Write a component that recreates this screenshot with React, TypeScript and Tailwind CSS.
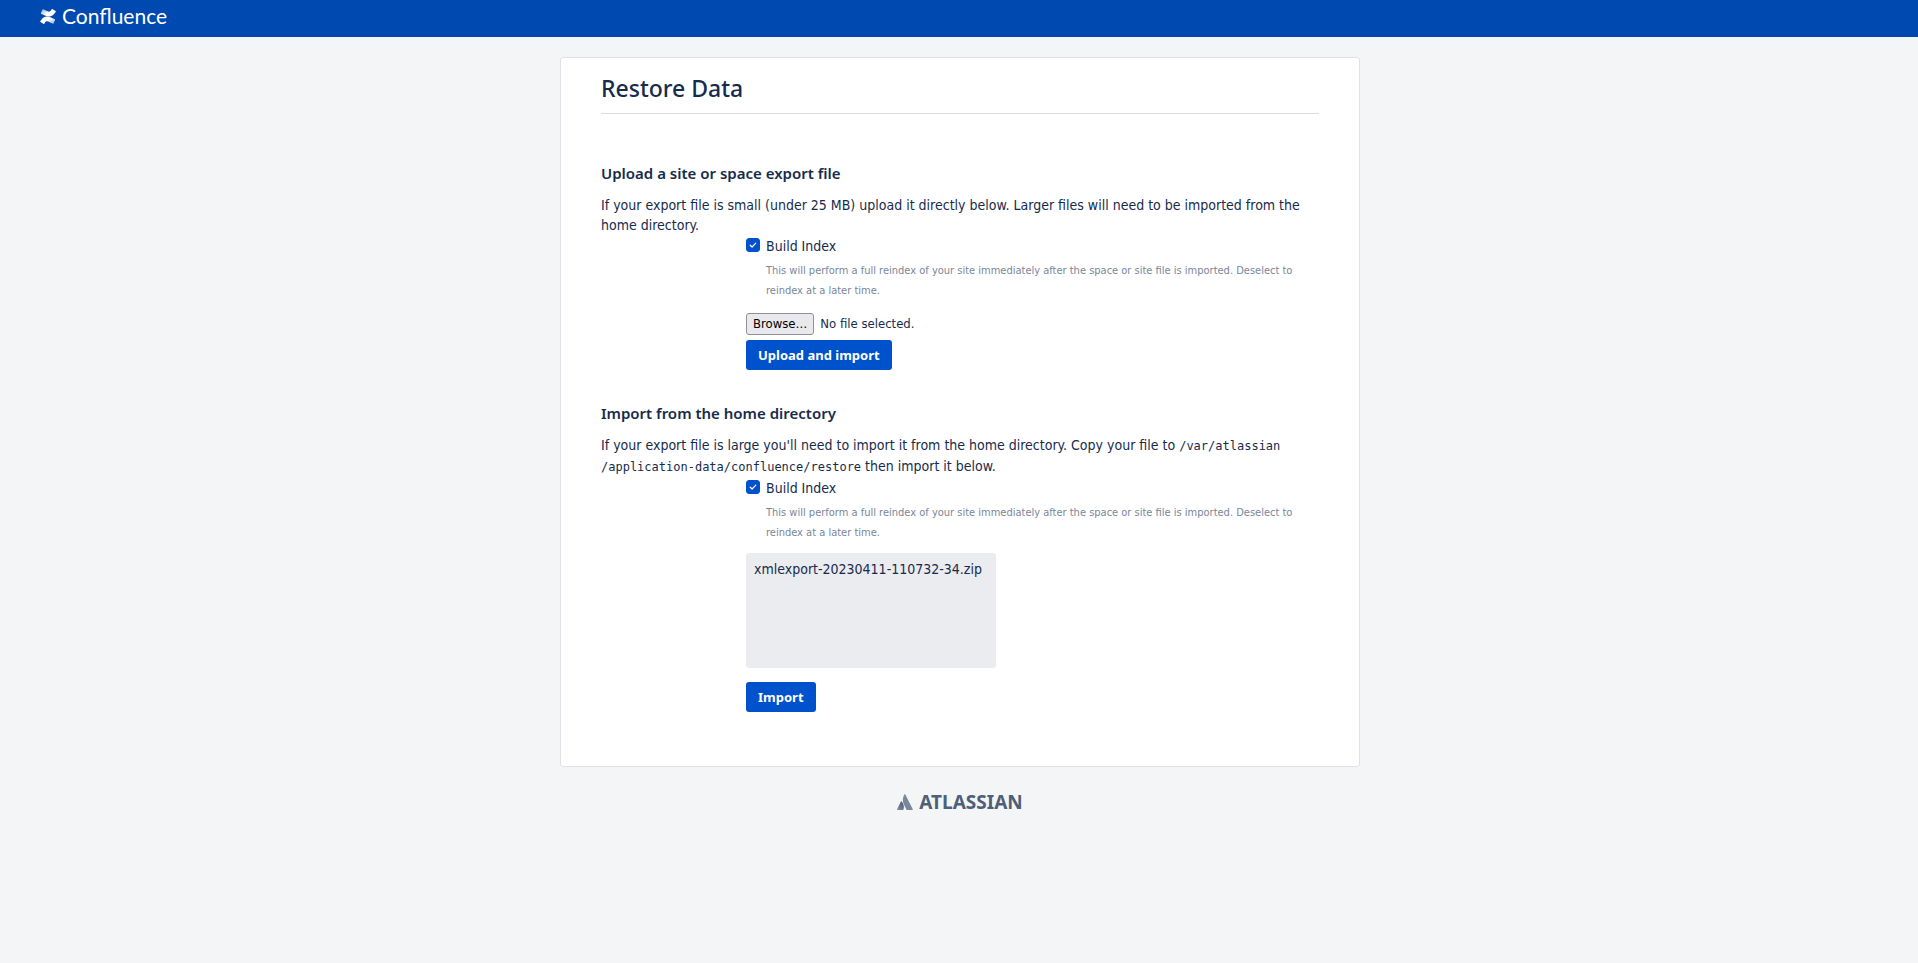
import type { ReactNode } from 'react';

const SWOOSH =
  'M9.26 187.33c-2.64 4.307-5.607 9.305-8.126 13.287a8.127 8.127 0 0 0 2.722 11.052l52.823 32.507a8.127 8.127 0 0 0 11.256-2.763c2.113-3.536 4.835-8.127 7.801-13.044 20.926-34.538 41.974-30.312 79.925-12.19l52.376 24.908a8.127 8.127 0 0 0 10.93-4.063l25.152-56.886a8.127 8.127 0 0 0-4.063-10.646c-11.052-5.201-33.034-15.562-52.823-25.111-71.189-34.579-131.691-32.344-177.973 42.949z';

function ConfluenceLogo() {
  return (
    <a href="#home" className="flex items-center gap-1.5 text-white">
      <svg viewBox="0 0 256 246" className="h-[15px] w-4" aria-hidden="true">
        <defs>
          <linearGradient id="swoosh" x1="1" y1="1" x2="0.2" y2="0.4">
            <stop offset="0" stopColor="#fff" stopOpacity="0.5" />
            <stop offset="0.7" stopColor="#fff" />
          </linearGradient>
        </defs>
        <path d={SWOOSH} fill="url(#swoosh)" />
        <path d={SWOOSH} fill="url(#swoosh)" transform="rotate(180 128 123)" />
      </svg>
      <span className="font-['Lato',sans-serif] text-[21px] leading-6">Confluence</span>
    </a>
  );
}

function AtlassianLogo() {
  return (
    <a href="#atlassian" className="flex items-center gap-1.5 text-[#505f79]">
      <svg viewBox="0 0 16 16" className="h-4 w-4" aria-hidden="true">
        <defs>
          <linearGradient id="atlassian-left" x1="0.9" y1="0.2" x2="0.3" y2="1">
            <stop offset="0" stopColor="#505f79" />
            <stop offset="1" stopColor="#7a869a" />
          </linearGradient>
        </defs>
        <path
          d="M4.700 7.400c-.2-.3-.6-.3-.8.1L.1 15.300c-.1.3.1.700.5.700h5.300c.2 0 .4-.1.500-.3 1.100-2.400.4-6-1.700-8.300z"
          fill="url(#atlassian-left)"
        />
        <path
          d="M7.500.4C5.300 3.800 5.500 7.600 6.900 10.400l2.600 5.300c.1.200.3.3.5.3h5.300c.4 0 .6-.4.5-.7L8.300.4c-.2-.4-.6-.4-.8 0z"
          fill="#7a869a"
        />
      </svg>
      <span className="text-[19px] leading-6 font-bold">ATLASSIAN</span>
    </a>
  );
}

function BuildIndex({ id }: { id: string }) {
  return (
    <div className="mt-px flex gap-1.5">
      <span className="grid h-4 w-3.5 shrink-0 items-end">
        <input
          id={id}
          type="checkbox"
          defaultChecked
          aria-describedby={`${id}-hint`}
          className="peer col-start-1 row-start-1 size-3.5 appearance-none rounded-[3px] border border-[#8f8f9d] bg-white checked:border-[#0052cc] checked:bg-[#0052cc]"
        />
        <svg
          viewBox="0 0 14 14"
          className="pointer-events-none col-start-1 row-start-1 hidden size-3.5 peer-checked:block"
          aria-hidden="true"
        >
          <path
            d="M4.200 7.200l1.900 1.800 3.700-3.800"
            fill="none"
            stroke="#fff"
            strokeWidth="1.200"
            strokeLinecap="round"
            strokeLinejoin="round"
          />
        </svg>
      </span>
      <div>
        <label htmlFor={id} className="block">
          Build Index
        </label>
        <p id={`${id}-hint`} className="mt-[5px] text-[11px] leading-5 text-[#7a869a]">
          This will perform a full reindex of your site immediately after the space or site file is imported. Deselect
          to reindex at a later time.
        </p>
      </div>
    </div>
  );
}

function PrimaryButton({ children }: { children: ReactNode }) {
  return (
    <button
      type="submit"
      className="block h-[30px] rounded-[3px] bg-[#0052cc] px-3 font-['Noto_Sans',sans-serif] text-[13px] leading-5 font-bold text-white hover:bg-[#0065ff]"
    >
      {children}
    </button>
  );
}

function SectionHeading({ children }: { children: ReactNode }) {
  return <h2 className="font-['Noto_Sans',sans-serif] text-[15px] leading-5 font-semibold">{children}</h2>;
}

export default function App() {
  return (
    <div className="flex min-h-screen flex-col bg-[#f4f5f7] font-['Noto_Sans',sans-serif] text-[#172b4d]">
      <header className="h-[37px] bg-[#0049b0] pt-1 pl-10">
        <div className="flex">
          <ConfluenceLogo />
        </div>
      </header>

      <div className="pl-0.5">
        <main className="mx-auto mt-5 w-full max-w-[800px] rounded-[3px] border border-[#dfe1e6] bg-white px-10 pt-4 pb-[54px]">
          <h1 className="border-b border-[#dcdde1] pb-[11px] text-[23px] leading-7 font-medium">Restore Data</h1>

          <div className="font-['DejaVu_Sans_Condensed','DejaVu_Sans',sans-serif] text-sm">
            <section className="mt-[49px]">
              <SectionHeading>Upload a site or space export file</SectionHeading>
              <p className="mt-3">
                If your export file is small (under 25 MB) upload it directly below. Larger files will need to be
                imported from the home directory.
              </p>
              <form className="pl-[145px]" onSubmit={(event) => event.preventDefault()}>
                <BuildIndex id="upload-build-index" />
                <div className="mt-3 flex items-center gap-1.5 text-[13px]">
                  <input id="export-file" type="file" className="peer sr-only" />
                  <label
                    htmlFor="export-file"
                    className="h-[22px] rounded-[3px] border border-[#8f8f9d] bg-[#e9e9ed] px-1.5 leading-5 text-black"
                  >
                    Browse…
                  </label>
                  <span className="leading-5">No file selected.</span>
                </div>
                <div className="mt-[5px]">
                  <PrimaryButton>Upload and import</PrimaryButton>
                </div>
              </form>
            </section>

            <section className="mt-[33px]">
              <SectionHeading>Import from the home directory</SectionHeading>
              <p className="mt-3 leading-[21px]">
                If your export file is large you'll need to import it from the home directory. Copy your file to{' '}
                <code className="font-['DejaVu_Sans_Mono',monospace] text-xs leading-5">
                  /var/atlassian
                  <wbr />
                  /application-data/confluence/restore
                </code>{' '}
                then import it below.
              </p>
              <form className="pl-[145px]" onSubmit={(event) => event.preventDefault()}>
                <BuildIndex id="restore-build-index" />
                <select
                  size={5}
                  aria-label="Export files in the home directory"
                  className="mt-2.5 block h-[115px] w-[250px] appearance-none rounded-[3px] bg-[#ebecf0] px-2 py-2"
                >
                  <option>xmlexport-20230411-110732-34.zip</option>
                </select>
                <div className="mt-3.5">
                  <PrimaryButton>Import</PrimaryButton>
                </div>
              </form>
            </section>
          </div>
        </main>

        <footer className="flex justify-center pt-[23px]">
          <AtlassianLogo />
        </footer>
      </div>
    </div>
  );
}
